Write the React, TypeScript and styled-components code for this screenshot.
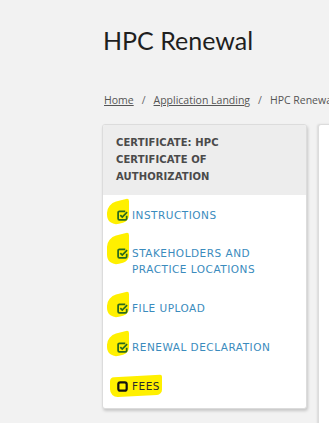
import { createGlobalStyle, styled } from "styled-components";

const GlobalStyle = createGlobalStyle`
  html, body {
    margin: 0;
    padding: 0;
    background: #f2f2f2;
    overflow: hidden;
  }
  body {
    font-family: "Open Sans", "Liberation Sans", sans-serif;
  }
`;

type Step = {
  label: string[];
  done: boolean;
  tall?: boolean;
};

const steps: Step[] = [
  { label: ["INSTRUCTIONS"], done: true },
  { label: ["STAKEHOLDERS AND", "PRACTICE LOCATIONS"], done: true, tall: true },
  { label: ["FILE UPLOAD"], done: true },
  { label: ["RENEWAL DECLARATION"], done: true },
  { label: ["FEES"], done: false },
];

const CheckIcon = () => (
  <svg width="11" height="11" viewBox="0 0 10 10">
    <path
      d="M7.5 1.2H2.2a1.2 1.2 0 0 0-1.2 1.2v5.4a1.2 1.2 0 0 0 1.2 1.2h5.4a1.2 1.2 0 0 0 1.2-1.2V5.2"
      fill="none"
      stroke="#2a6a1e"
      strokeWidth="1.6"
    />
    <path
      d="M3 4.6l1.8 1.8L9.2 2"
      fill="none"
      stroke="#2a6a1e"
      strokeWidth="1.6"
    />
  </svg>
);

const EmptyIcon = () => (
  <svg width="11" height="11" viewBox="0 0 10 10">
    <rect
      x="1.2"
      y="1.2"
      width="7.6"
      height="7.6"
      rx="1.8"
      fill="none"
      stroke="#111"
      strokeWidth="2"
    />
  </svg>
);

const App = () => {
  return (
    <>
      <GlobalStyle />
      <Page>
        <Title>HPC Renewal</Title>
        <Breadcrumb>
          <Crumb href="#">Home</Crumb>
          <Sep>/</Sep>
          <Crumb href="#">Application Landing</Crumb>
          <Sep>/</Sep>
          <Current>HPC Renewal</Current>
        </Breadcrumb>
        <Columns>
          <Card>
            <CardHeader>
              <span>CERTIFICATE: HPC</span>
              <span>CERTIFICATE OF</span>
              <span>AUTHORIZATION</span>
            </CardHeader>
            <StepList>
              {steps.map((s) => (
                <StepItem key={s.label[0]} $done={s.done}>
                  {!s.done && <WideMarker />}
                  <IconWrap>
                    {s.done && <Marker $tall={s.tall} />}
                    {s.done ? <CheckIcon /> : <EmptyIcon />}
                  </IconWrap>
                  <StepText>
                    {s.label.map((l) => (
                      <span key={l}>{l}</span>
                    ))}
                  </StepText>
                </StepItem>
              ))}
            </StepList>
          </Card>
          <SideCard />
        </Columns>
      </Page>
    </>
  );
};

const Page = styled.div`
  padding: 25px 0 0 102px;
  width: 420px;
`;

const Title = styled.h1`
  margin: 0 0 0 1px;
  font-family: Lato, "Liberation Sans", sans-serif;
  font-weight: 400;
  font-size: 25px;
  line-height: 30px;
  color: #1f1f1f;
`;

const Breadcrumb = styled.nav`
  display: flex;
  align-items: center;
  gap: 8px;
  margin: 38px 0 0 2px;
  font-size: 10.5px;
  line-height: 14px;
  color: #555;
  white-space: nowrap;
`;

const Crumb = styled.a`
  color: #555;
  text-decoration: underline;
`;

const Sep = styled.span`
  color: #666;
`;

const Current = styled.span`
  color: #555;
`;

const Columns = styled.div`
  display: flex;
  gap: 11px;
  margin-top: 17px;
  align-items: flex-start;
`;

const Card = styled.div`
  width: 203px;
  flex-shrink: 0;
  background: #fff;
  border: 1px solid #dcdcdc;
  border-radius: 3px;
  box-shadow: 1px 2px 3px rgba(0, 0, 0, 0.18);
  overflow: hidden;
`;

const CardHeader = styled.div`
  display: flex;
  flex-direction: column;
  background: #ededed;
  padding: 9px 10px 10px 13px;
  font-family: "DejaVu Sans", "Liberation Sans", sans-serif;
  font-size: 10px;
  font-weight: 700;
  line-height: 17px;
  letter-spacing: 0.1px;
  color: #4a4a4a;
`;

const StepList = styled.div`
  display: flex;
  flex-direction: column;
  padding: 1px 0 3px;
`;

const StepItem = styled.div<{ $done: boolean }>`
  position: relative;
  display: flex;
  align-items: flex-start;
  gap: 4px;
  padding: 11px 0 11px 14px;
  color: ${(p) => (p.$done ? "#3a8bbd" : "#2a2a2a")};
  &:nth-child(n + 3) {
    padding-top: 12px;
  }
`;

const IconWrap = styled.span`
  position: relative;
  display: flex;
  width: 11px;
  height: 16px;
  align-items: center;
  flex-shrink: 0;

  svg {
    position: relative;
  }
`;

const Marker = styled.span<{ $tall?: boolean }>`
  position: absolute;
  left: -10px;
  top: ${(p) => (p.$tall ? "-10px" : "-6px")};
  width: 22px;
  height: ${(p) => (p.$tall ? "29px" : "23px")};
  background: #fff000;
  border-radius: 9px 3px 6px 12px;
  transform: skewY(-14deg);
`;

const WideMarker = styled.span`
  position: absolute;
  left: 7px;
  top: 10px;
  width: 52px;
  height: 20px;
  background: #fff000;
  border-radius: 4px 2px 5px 8px;
  transform: skewY(-3deg);
`;

const StepText = styled.span`
  position: relative;
  display: flex;
  flex-direction: column;
  font-family: "DejaVu Sans", "Liberation Sans", sans-serif;
  font-size: 10.5px;
  line-height: 16px;
  letter-spacing: 0.5px;
`;

const SideCard = styled.div`
  width: 200px;
  height: 320px;
  flex-shrink: 0;
  background: #fff;
  border: 1px solid #dcdcdc;
  border-radius: 3px;
  box-shadow: -1px 0 2px rgba(0, 0, 0, 0.1);
`;

export default App;
